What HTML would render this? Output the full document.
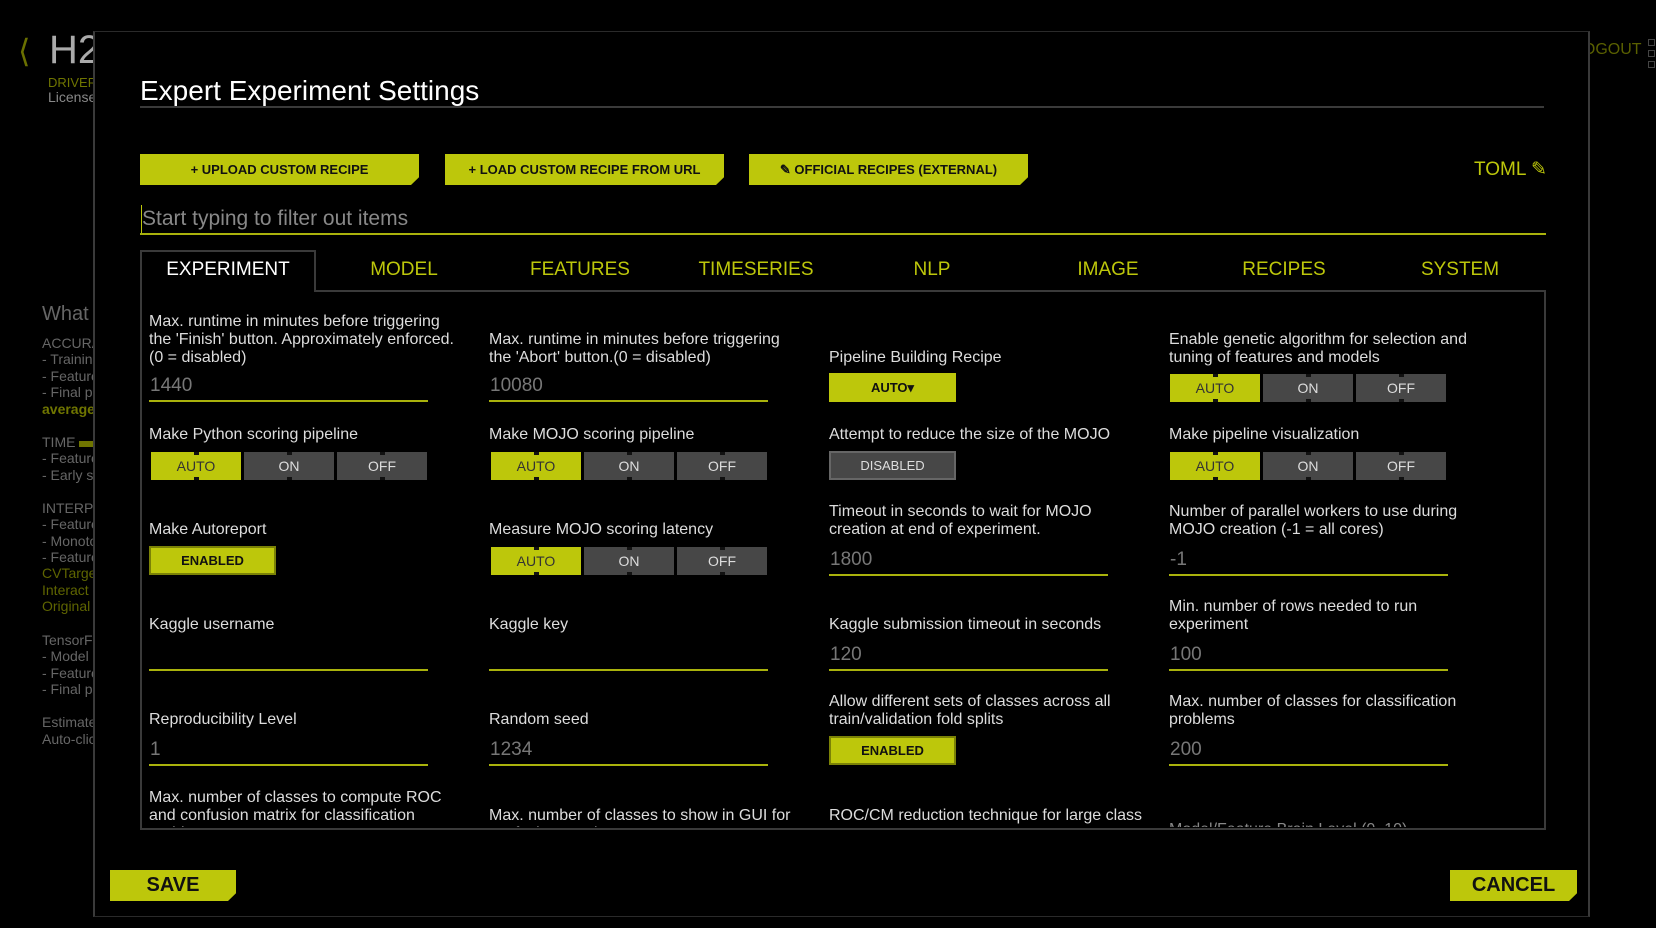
<!DOCTYPE html>
<html><head><meta charset="utf-8"><style>
*{margin:0;padding:0;box-sizing:border-box}
body{width:1656px;height:928px;background:#000;overflow:hidden;position:relative;font-family:"Liberation Sans Narrow","Liberation Sans",sans-serif;color:#ddd}
.a{position:absolute;white-space:nowrap}
.side{position:absolute;left:42px;font-size:14px;color:#666;white-space:nowrap;line-height:16px}
#modal{position:absolute;left:93px;top:31px;width:1497px;height:886px;background:#000;border:1px solid #2a2a2a;border-left:2px solid #3a3a3a;border-right:2px solid #3a3a3a}
.btn{position:absolute;top:154px;height:31px;width:279px;background:#bdc70b;color:#111;font-weight:bold;font-size:13px;text-align:center;line-height:31px;clip-path:polygon(0 0,100% 0,100% 75%,calc(100% - 8px) 100%,0 100%)}
.tab{position:absolute;top:250px;width:176px;height:40px;text-align:center;line-height:40px;font-size:19px;color:#bdc70b}
#clip{position:absolute;left:0;top:0;width:1656px;height:928px;clip-path:inset(292px 112px 101px 142px)}
.lab{position:absolute;font-size:16px;line-height:18px;color:#ddd;transform:translateY(-100%);width:330px}
.val{position:absolute;font-size:19px;color:#777;width:279px;height:30px;border-bottom:2px solid #a9b20c;line-height:28px;padding-left:1px}
.tg{position:absolute;height:28px;width:276px;display:flex;gap:3px}
.tg div{flex:1;background:#474747;color:#ddd;font-size:14px;text-align:center;line-height:28px;position:relative}
.tg div.on{background:#bdc70b;color:#333}
.tg div:before,.tg div:after{content:"";position:absolute;left:50%;width:5px;height:3px;margin-left:-2px;background:#111}
.tg div:before{top:0}.tg div:after{bottom:0}
.bb{position:absolute;width:127px;height:29px;text-align:center;line-height:25px;font-size:13px;font-weight:bold}
</style></head><body>
<div class="a" style="left:18px;top:34px;font-size:32px;color:#6a7000;line-height:34px">&#10216;</div>
<div class="a" style="left:49px;top:28px;font-size:40px;color:#aaa;line-height:44px">H2O</div>
<div class="a" style="left:48px;top:75px;font-size:13px;color:#6f7500">DRIVERLESS</div>
<div class="a" style="left:48px;top:89px;font-size:14px;color:#888">License</div>
<div class="side" style="top:306px;font-size:20px;color:#666">What</div>
<div class="side" style="top:335px">ACCURACY</div>
<div class="side" style="top:351px">- Training</div>
<div class="side" style="top:368px">- Feature</div>
<div class="side" style="top:384px">- Final p</div>
<div class="side" style="top:401px;color:#6f7500;font-weight:bold">average</div>
<div class="side" style="top:434px">TIME <span style="display:inline-block;width:20px;height:6px;background:#6f7500"></span></div>
<div class="side" style="top:450px">- Feature</div>
<div class="side" style="top:467px">- Early s</div>
<div class="side" style="top:500px">INTERPRET</div>
<div class="side" style="top:516px">- Feature</div>
<div class="side" style="top:533px">- Monoton</div>
<div class="side" style="top:549px">- Feature</div>
<div class="side" style="top:565px;color:#5f6500">CVTarget</div>
<div class="side" style="top:582px;color:#5f6500">Interact</div>
<div class="side" style="top:598px;color:#5f6500">Original</div>
<div class="side" style="top:632px">TensorFlow</div>
<div class="side" style="top:648px">- Model</div>
<div class="side" style="top:665px">- Feature</div>
<div class="side" style="top:681px">- Final p</div>
<div class="side" style="top:714px">Estimated</div>
<div class="side" style="top:731px">Auto-click</div>
<div class="a" style="left:1574px;top:41px;font-size:16px;color:#5a6000">LOGOUT</div>
<div class="a" style="left:1648px;top:39px;width:7px;height:7px;border:1px solid #444"></div>
<div class="a" style="left:1648px;top:50px;width:7px;height:7px;border:1px solid #444"></div>
<div class="a" style="left:1648px;top:61px;width:7px;height:7px;border:1px solid #444"></div>

<div id="modal"></div>
<div class="a" style="left:140px;top:73px;font-size:28px;line-height:36px;color:#fff">Expert Experiment Settings</div>
<div class="a" style="left:140px;top:106px;width:1404px;height:2px;background:#3a3a3a"></div>

<div class="btn" style="left:140px">+ UPLOAD CUSTOM RECIPE</div>
<div class="btn" style="left:445px">+ LOAD CUSTOM RECIPE FROM URL</div>
<div class="btn" style="left:749px">&#9998; OFFICIAL RECIPES (EXTERNAL)</div>
<div class="a" style="left:1474px;top:158px;font-size:19px;line-height:24px;color:#bdc70b">TOML &#9998;</div>

<div class="a" style="left:142px;top:206px;font-size:21px;line-height:26px;color:#888">Start typing to filter out items</div>
<div class="a" style="left:141px;top:205px;width:1px;height:28px;background:#bdc70b"></div>
<div class="a" style="left:140px;top:233px;width:1406px;height:2px;background:#a9b20c"></div>

<div class="a" style="left:140px;top:250px;width:176px;height:42px;border:2px solid #3a3a3a;border-bottom:none"></div>
<div class="a" style="left:316px;top:290px;width:1230px;height:2px;background:#3a3a3a"></div>
<div class="a" style="left:140px;top:290px;width:2px;height:540px;background:#3a3a3a"></div>
<div class="a" style="left:1544px;top:290px;width:2px;height:540px;background:#3a3a3a"></div>
<div class="a" style="left:140px;top:828px;width:1406px;height:2px;background:#3a3a3a"></div>
<div class="tab" style="left:140px;color:#fff">EXPERIMENT</div>
<div class="tab" style="left:316px">MODEL</div>
<div class="tab" style="left:492px">FEATURES</div>
<div class="tab" style="left:668px">TIMESERIES</div>
<div class="tab" style="left:844px">NLP</div>
<div class="tab" style="left:1020px">IMAGE</div>
<div class="tab" style="left:1196px">RECIPES</div>
<div class="tab" style="left:1372px">SYSTEM</div>

<div id="clip">
<div class="lab" style="left:149px;top:367px">Max. runtime in minutes before triggering<br>the 'Finish' button. Approximately enforced.<br>(0 = disabled)</div>
<div class="val" style="left:149px;top:372px">1440</div>
<div class="lab" style="left:489px;top:367px">Max. runtime in minutes before triggering<br>the 'Abort' button.(0 = disabled)</div>
<div class="val" style="left:489px;top:372px">10080</div>
<div class="lab" style="left:829px;top:367px">Pipeline Building Recipe</div>
<div class="bb" style="left:829px;top:373px;background:#bdc70b;color:#111;line-height:29px">AUTO&#9662;</div>
<div class="lab" style="left:1169px;top:367px">Enable genetic algorithm for selection and<br>tuning of features and models</div>
<div class="tg" style="left:1170px;top:374px"><div class="on">AUTO</div><div>ON</div><div>OFF</div></div>
<div class="lab" style="left:149px;top:444px">Make Python scoring pipeline</div>
<div class="tg" style="left:151px;top:452px"><div class="on">AUTO</div><div>ON</div><div>OFF</div></div>
<div class="lab" style="left:489px;top:444px">Make MOJO scoring pipeline</div>
<div class="tg" style="left:491px;top:452px"><div class="on">AUTO</div><div>ON</div><div>OFF</div></div>
<div class="lab" style="left:829px;top:444px">Attempt to reduce the size of the MOJO</div>
<div class="bb" style="left:829px;top:451px;background:#474747;color:#ddd;font-weight:normal;border:2px solid #666">DISABLED</div>
<div class="lab" style="left:1169px;top:444px">Make pipeline visualization</div>
<div class="tg" style="left:1170px;top:452px"><div class="on">AUTO</div><div>ON</div><div>OFF</div></div>
<div class="lab" style="left:149px;top:539px">Make Autoreport</div>
<div class="bb" style="left:149px;top:546px;background:#bdc70b;color:#111;border:2px solid #7b8206">ENABLED</div>
<div class="lab" style="left:489px;top:539px">Measure MOJO scoring latency</div>
<div class="tg" style="left:491px;top:547px"><div class="on">AUTO</div><div>ON</div><div>OFF</div></div>
<div class="lab" style="left:829px;top:539px">Timeout in seconds to wait for MOJO<br>creation at end of experiment.</div>
<div class="val" style="left:829px;top:546px">1800</div>
<div class="lab" style="left:1169px;top:539px">Number of parallel workers to use during<br>MOJO creation (-1 = all cores)</div>
<div class="val" style="left:1169px;top:546px">-1</div>
<div class="lab" style="left:149px;top:634px">Kaggle username</div>
<div class="val" style="left:149px;top:641px"></div>
<div class="lab" style="left:489px;top:634px">Kaggle key</div>
<div class="val" style="left:489px;top:641px"></div>
<div class="lab" style="left:829px;top:634px">Kaggle submission timeout in seconds</div>
<div class="val" style="left:829px;top:641px">120</div>
<div class="lab" style="left:1169px;top:634px">Min. number of rows needed to run<br>experiment</div>
<div class="val" style="left:1169px;top:641px">100</div>
<div class="lab" style="left:149px;top:729px">Reproducibility Level</div>
<div class="val" style="left:149px;top:736px">1</div>
<div class="lab" style="left:489px;top:729px">Random seed</div>
<div class="val" style="left:489px;top:736px">1234</div>
<div class="lab" style="left:829px;top:729px">Allow different sets of classes across all<br>train/validation fold splits</div>
<div class="bb" style="left:829px;top:736px;background:#bdc70b;color:#111;border:2px solid #7b8206">ENABLED</div>
<div class="lab" style="left:1169px;top:729px">Max. number of classes for classification<br>problems</div>
<div class="val" style="left:1169px;top:736px">200</div>
<div class="lab" style="left:149px;top:843px">Max. number of classes to compute ROC<br>and confusion matrix for classification<br>problems</div>
<div class="lab" style="left:489px;top:843px">Max. number of classes to show in GUI for<br>confusion matrix</div>
<div class="lab" style="left:829px;top:843px">ROC/CM reduction technique for large class<br>counts</div>
<div class="lab" style="left:1169px;top:839px;color:#888">Model/Feature Brain Level (0..10)</div>
</div>

<div class="a" style="left:110px;top:870px;width:126px;height:31px;background:#bdc70b;color:#111;font-weight:bold;font-size:20px;text-align:center;line-height:31px;clip-path:polygon(0 0,100% 0,100% 75%,calc(100% - 8px) 100%,0 100%)">SAVE</div>
<div class="a" style="left:1450px;top:870px;width:127px;height:31px;background:#bdc70b;color:#111;font-weight:bold;font-size:20px;text-align:center;line-height:31px;clip-path:polygon(0 0,100% 0,100% 75%,calc(100% - 8px) 100%,0 100%)">CANCEL</div>
</body></html>
